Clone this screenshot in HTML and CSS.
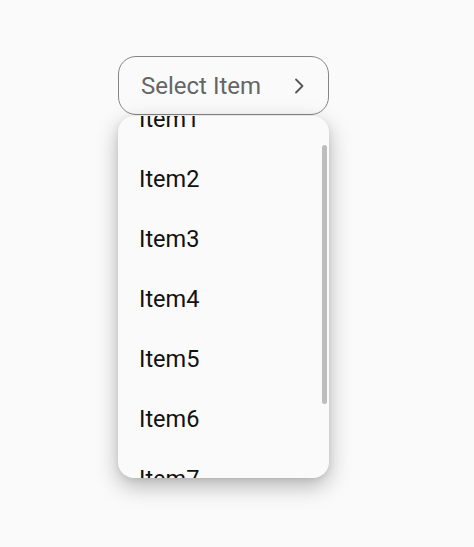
FILE: index.html
```html
<!DOCTYPE html>
<html>
<head>
<meta charset="utf-8">
<link rel="stylesheet" href="styles.css">
</head>
<body>
<div class="page">
  <div class="select">
    <span class="select-label">Select Item</span>
    <svg class="chevron" width="12" height="16" viewBox="0 0 12 16"><path d="M2 1.5 L8.5 8 L2 14.5" fill="none" stroke="#555" stroke-width="1.8" stroke-linecap="round" stroke-linejoin="round"/></svg>
  </div>
  <div class="menu">
    <ul class="list">
      <li class="item">Item1</li>
      <li class="item">Item2</li>
      <li class="item">Item3</li>
      <li class="item">Item4</li>
      <li class="item">Item5</li>
      <li class="item">Item6</li>
      <li class="item">Item7</li>
    </ul>
    <div class="scrollbar"></div>
  </div>
</div>
</body>
</html>
```

FILE: styles.css
```css
html, body {
  margin: 0;
  padding: 0;
  background: #fafafa;
  font-family: Roboto, "Liberation Sans", sans-serif;
}
.page {
  display: flex;
  flex-direction: column;
  align-items: flex-start;
  padding: 56px 0 0 118px;
  width: 474px;
  height: 547px;
  box-sizing: border-box;
}
.select {
  box-sizing: border-box;
  width: 211px;
  height: 59px;
  border: 1.5px solid #858585;
  border-radius: 18px;
  display: flex;
  align-items: center;
  justify-content: space-between;
  padding: 0 22px 0 22px;
  background: #fafafa;
}
.select-label {
  font-size: 24px;
  color: #666;
  letter-spacing: 0;
}
.chevron {
  display: block;
  margin-top: 1px;
}
.menu {
  position: relative;
  margin-top: 1px;
  width: 211px;
  height: 362px;
  border-radius: 16px;
  background: #fafafa;
  overflow: hidden;
  box-shadow: 0 8px 22px rgba(0, 0, 0, 0.28), 0 2px 6px rgba(0, 0, 0, 0.08);
}
.list {
  list-style: none;
  margin: -27px 0 0 0;
  padding: 0;
}
.item {
  height: 60px;
  line-height: 60px;
  padding-left: 21px;
  font-size: 23.5px;
  color: #111;
}
.scrollbar {
  position: absolute;
  right: 2px;
  top: 29px;
  width: 5px;
  height: 259px;
  border-radius: 3px;
  background: #bdbdbd;
}
```
